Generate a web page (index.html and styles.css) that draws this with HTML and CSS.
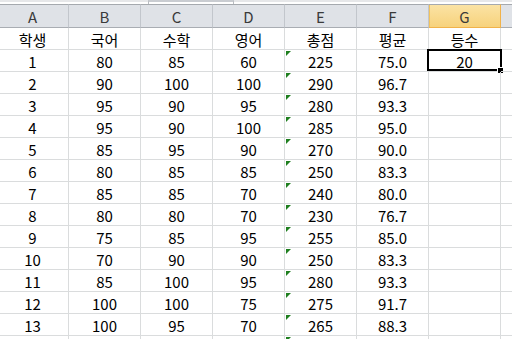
FILE: index.html
```html
<!DOCTYPE html>
<html lang="ko">
<head>
<meta charset="utf-8">
<link rel="stylesheet" href="styles.css">
</head>
<body>
<div class="window">
<div class="topbar"><span class="tb1"></span><span class="tb2"></span><span class="tb3"></span></div>
<div class="sheet">
  <div class="hd">A</div><div class="hd">B</div><div class="hd">C</div><div class="hd">D</div><div class="hd">E</div><div class="hd">F</div><div class="hd sel">G</div><div class="hd"></div>

  <div class="c">학생</div><div class="c">국어</div><div class="c">수학</div><div class="c">영어</div><div class="c">총점</div><div class="c">평균</div><div class="c">등수</div><div class="c"></div>

  <div class="c">1</div><div class="c">80</div><div class="c">85</div><div class="c">60</div><div class="c w">225</div><div class="c">75.0</div><div class="c active">20</div><div class="c"></div>
  <div class="c">2</div><div class="c">90</div><div class="c">100</div><div class="c">100</div><div class="c w">290</div><div class="c">96.7</div><div class="c"></div><div class="c"></div>
  <div class="c">3</div><div class="c">95</div><div class="c">90</div><div class="c">95</div><div class="c w">280</div><div class="c">93.3</div><div class="c"></div><div class="c"></div>
  <div class="c">4</div><div class="c">95</div><div class="c">90</div><div class="c">100</div><div class="c w">285</div><div class="c">95.0</div><div class="c"></div><div class="c"></div>
  <div class="c">5</div><div class="c">85</div><div class="c">95</div><div class="c">90</div><div class="c w">270</div><div class="c">90.0</div><div class="c"></div><div class="c"></div>
  <div class="c">6</div><div class="c">80</div><div class="c">85</div><div class="c">85</div><div class="c w">250</div><div class="c">83.3</div><div class="c"></div><div class="c"></div>
  <div class="c">7</div><div class="c">85</div><div class="c">85</div><div class="c">70</div><div class="c w">240</div><div class="c">80.0</div><div class="c"></div><div class="c"></div>
  <div class="c">8</div><div class="c">80</div><div class="c">80</div><div class="c">70</div><div class="c w">230</div><div class="c">76.7</div><div class="c"></div><div class="c"></div>
  <div class="c">9</div><div class="c">75</div><div class="c">85</div><div class="c">95</div><div class="c w">255</div><div class="c">85.0</div><div class="c"></div><div class="c"></div>
  <div class="c">10</div><div class="c">70</div><div class="c">90</div><div class="c">90</div><div class="c w">250</div><div class="c">83.3</div><div class="c"></div><div class="c"></div>
  <div class="c">11</div><div class="c">85</div><div class="c">100</div><div class="c">95</div><div class="c w">280</div><div class="c">93.3</div><div class="c"></div><div class="c"></div>
  <div class="c">12</div><div class="c">100</div><div class="c">100</div><div class="c">75</div><div class="c w">275</div><div class="c">91.7</div><div class="c"></div><div class="c"></div>
  <div class="c">13</div><div class="c">100</div><div class="c">95</div><div class="c">70</div><div class="c w">265</div><div class="c">88.3</div><div class="c"></div><div class="c"></div>
  <div class="c"></div><div class="c"></div><div class="c"></div><div class="c"></div><div class="c w"></div><div class="c"></div><div class="c"></div><div class="c"></div>
</div>
</div>
</body>
</html>
```
FILE: styles.css
```css
html, body {
  margin: 0;
  padding: 0;
  background: #ffffff;
}
body {
  font-family: "Noto Sans CJK KR", "Noto Sans", sans-serif;
  font-size: 15px;
  color: #000;
}
.window {
  width: 512px;
  height: 339px;
  overflow: hidden;
}
.topbar {
  height: 4px;
  display: flex;
  background: #ffffff;
}
.tb1 {
  width: 148px;
  border-top: 2px solid #e6e7e9;
  box-sizing: border-box;
}
.tb2 {
  width: 86px;
  border-top: 2px solid #c9ccd1;
  border-left: 1px solid #b9bcc1;
  border-right: 1px solid #b9bcc1;
  box-sizing: border-box;
}
.tb3 {
  flex: 1;
  border-top: 2px solid #e6e7e9;
  box-sizing: border-box;
}
.sheet {
  display: grid;
  grid-template-columns: repeat(8, 72px);
  grid-auto-rows: 22px;
  grid-template-rows: 24px;
  margin-left: -3px;
  width: 576px;
}
.hd {
  box-sizing: border-box;
  background: #dfe2e7;
  border-top: 1px solid #a5a9ae;
  border-bottom: 1px solid #a9adb3;
  border-right: 1px solid #c2c6cc;
  color: #3a3a3a;
  display: flex;
  align-items: center;
  justify-content: center;
  padding-top: 1px;
}
.hd.sel {
  background: linear-gradient(#fbe3a4, #f7d27c);
  border-bottom-color: #f1b24a;
  border-right-color: #f1b24a;
  box-shadow: inset 1px 0 0 #f1c25e;
}
.c {
  box-sizing: border-box;
  border-right: 1px solid #dadcdd;
  border-bottom: 1px solid #dadcdd;
  display: flex;
  align-items: center;
  justify-content: center;
  position: relative;
  line-height: 1;
  padding-top: 1px;
}
.c.w::before {
  content: "";
  position: absolute;
  left: 1px;
  top: 1px;
  width: 0;
  height: 0;
  border-top: 5px solid #1f7f1f;
  border-right: 5px solid transparent;
}
.c.active::before {
  content: "";
  position: absolute;
  left: -2px;
  top: -1px;
  right: -2px;
  bottom: 0;
  border: 2px solid #000;
}
.c.active::after {
  content: "";
  position: absolute;
  right: -3px;
  bottom: -2px;
  width: 5px;
  height: 5px;
  background: #000;
  box-shadow: 0 0 0 1px #fff;
}
```
